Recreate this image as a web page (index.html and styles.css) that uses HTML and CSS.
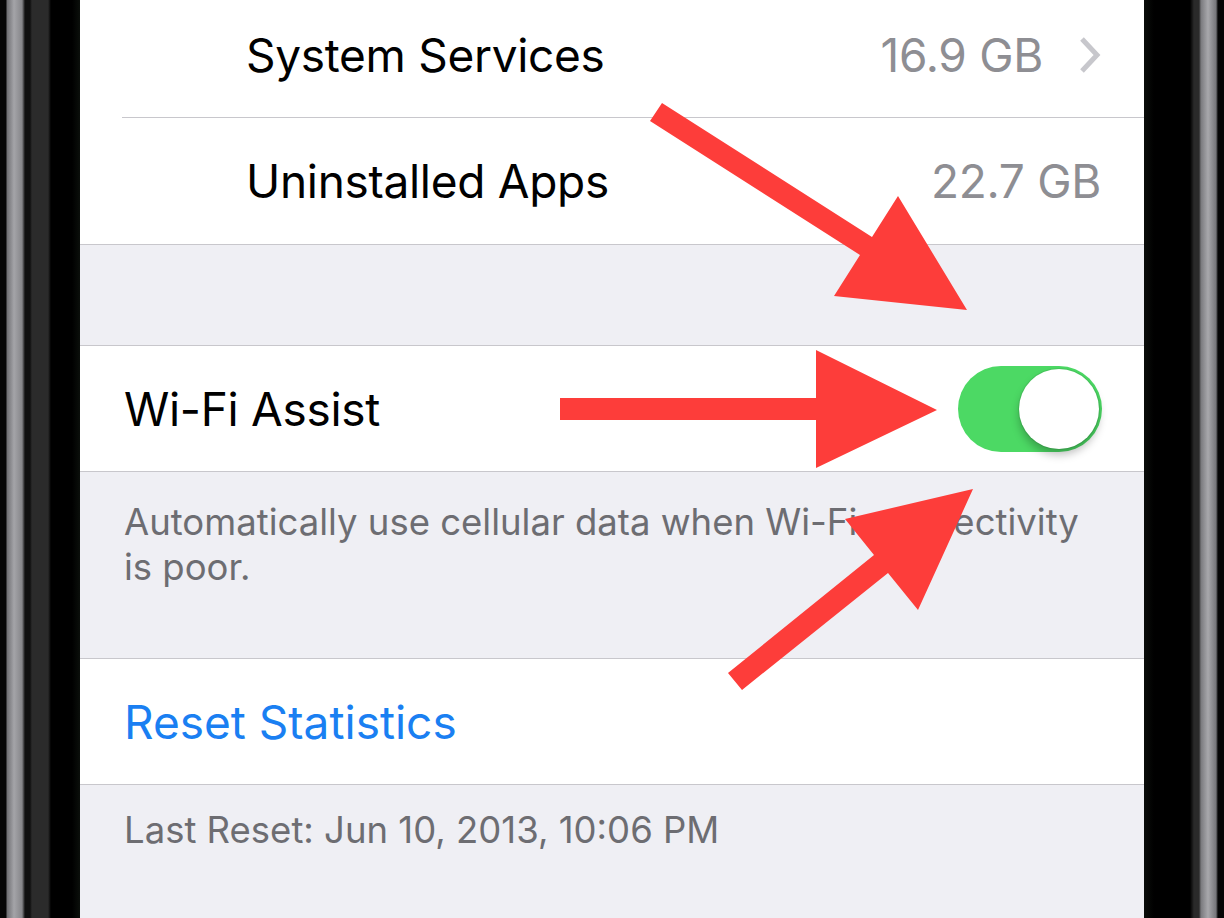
FILE: index.html
```html
<!DOCTYPE html>
<html lang="en">
<head>
  <meta charset="UTF-8">
  <title>Usage</title>
  <link rel="stylesheet" href="styles.css">
</head>
<body>

<div class="phone">
  <div class="bezel bezel-left"></div>

  <div class="screen">
    <div class="group">
      <div class="cell cell-indent">
        <span class="label">System Services</span>
        <span class="detail">16.9 GB</span>
        <svg class="chevron" width="22" height="38" viewBox="0 0 22 38">
          <polyline points="3,3 18,19 3,35" fill="none" stroke="#c7c7cc" stroke-width="5"/>
        </svg>
      </div>
      <div class="cell cell-indent">
        <span class="label">Uninstalled Apps</span>
        <span class="detail">22.7 GB</span>
      </div>
    </div>

    <div class="spacer"></div>

    <div class="group">
      <div class="cell">
        <span class="label">Wi-Fi Assist</span>
        <div class="switch on"><div class="knob"></div></div>
      </div>
    </div>

    <p class="footer footer-wide">Automatically use cellular data when Wi-Fi connectivity is poor.</p>

    <div class="group">
      <div class="cell">
        <span class="label link">Reset Statistics</span>
      </div>
    </div>

    <p class="footer">Last Reset: Jun 10, 2013, 10:06 PM</p>
  </div>

  <div class="bezel bezel-right"></div>
</div>

<svg class="arrows" viewBox="0 0 1224 918" width="1224" height="918">
  <polygon points="662,103 872,237 898,196 967,310 834,296 860,255 650,121"/>
  <polygon points="560,398 816,398 816,350 937,410 816,468 816,420 560,420"/>
  <polygon points="728,673 874,555 845,519 973,489 918,610 888,573 742,690"/>
</svg>

</body>
</html>
```

FILE: styles.css
```css
body {
  margin: 0;
  padding: 0;
  background-color: #000;
  font-family: Inter, "Liberation Sans", sans-serif;
  overflow: hidden;
}
.phone {
  display: flex;
  height: 918px;
  position: relative;
}
.bezel {
  width: 80px;
  flex-shrink: 0;
}
.bezel-left {
  background: linear-gradient(to right,
    #050505 0, #050505 6px,
    #6f6f73 7px, #a4a4a8 14px, #86868a 22px,
    #101010 25px, #101010 30px,
    #2b2b2b 32px, #2b2b2b 48px,
    #000 51px, #000 72px, #0b0f0b 80px);
}
.bezel-right {
  background: linear-gradient(to right,
    #0a0d0a 0, #000 10px, #000 46px,
    #2a2a2a 50px, #2a2a2a 55px,
    #7a7a7e 57px, #a8a8ac 64px, #76767a 72px,
    #050505 74px, #050505 80px);
}
.screen {
  flex: 1;
  background-color: #efeff4;
  margin-top: -8px;
}
.group {
  background-color: #fff;
  border-top: 1px solid #c8c7cc;
  border-bottom: 1px solid #c8c7cc;
}
.group:first-child {
  border-top: none;
}
.cell {
  height: 125px;
  display: flex;
  align-items: center;
  padding: 0 43px 0 44px;
  position: relative;
}
.cell + .cell {
  height: 126px;
  border-top: 1px solid #c8c7cc;
  margin-left: 42px;
}
.cell-indent {
  padding-left: 166px;
}
.cell-indent + .cell-indent {
  padding-left: 124px;
}
.label {
  flex: 1;
  font-size: 46px;
  color: #000;
  letter-spacing: -0.3px;
}
.link {
  color: #1a7ff2;
  letter-spacing: 0;
}
.detail {
  font-size: 46px;
  color: #8e8e93;
  letter-spacing: -0.3px;
}
.chevron {
  margin-left: 36px;
}
.spacer {
  height: 100px;
}
.footer {
  margin: 0;
  padding: 28px 44px 0;
  font-size: 36.5px;
  line-height: 45px;
  color: #6d6d72;
  height: 158px;
}
.footer-wide {
  padding-right: 64px;
}
.footer:last-child {
  padding-top: 23px;
  height: auto;
}
.switch {
  width: 144px;
  height: 86px;
  border-radius: 43px;
  background-color: #4cd964;
  position: relative;
  margin-right: -1px;
}
.knob {
  position: absolute;
  top: 3px;
  right: 3px;
  width: 80px;
  height: 80px;
  border-radius: 50%;
  background-color: #fff;
  box-shadow: 0 6px 8px rgba(0, 0, 0, 0.25), 0 0 0 1px rgba(0, 0, 0, 0.08);
}
.arrows {
  position: absolute;
  top: 0;
  left: 0;
  fill: #fd3d3a;
  pointer-events: none;
}
```
